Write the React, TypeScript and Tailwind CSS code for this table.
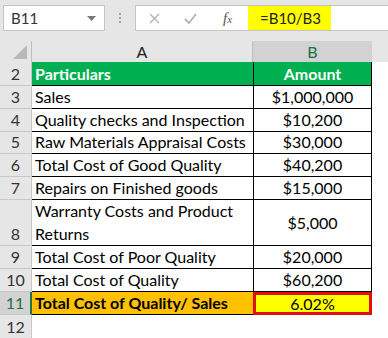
import React from "react";

const rows: { n: string; a: string; b: string; h: number }[] = [
  { n: "3", a: "Sales", b: "$1,000,000", h: 23 },
  { n: "4", a: "Quality checks and Inspection", b: "$10,200", h: 24 },
  { n: "5", a: "Raw Materials Appraisal Costs", b: "$30,000", h: 22 },
  { n: "6", a: "Total Cost of Good Quality", b: "$40,200", h: 23 },
  { n: "7", a: "Repairs on Finished goods", b: "$15,000", h: 23 },
];

const rows2: { n: string; a: string; b: string; h: number }[] = [
  { n: "9", a: "Total Cost of Poor Quality", b: "$20,000", h: 23 },
  { n: "10", a: "Total Cost of Quality", b: "$60,200", h: 23 },
];

function Row({ n, a, b, h }: { n: string; a: string; b: string; h: number }) {
  return (
    <div className="flex" style={{ height: h }}>
      <div className="w-[32px] shrink-0 bg-[#e6e6e6] border-b border-r border-[#c8c8c8] flex items-end justify-center text-[16px] text-[#333] leading-[22px]">
        {n}
      </div>
      <div className="w-[221px] shrink-0 border-b border-black flex items-end px-[3px] text-[16px] leading-[22px] text-black">
        {a}
      </div>
      <div className="w-[119px] shrink-0 border-b border-l border-r border-black flex items-end justify-center text-[16px] leading-[22px] text-black">
        {b}
      </div>
      <div className="flex-1 bg-white" />
    </div>
  );
}

export default function App() {
  return (
    <div
      className="w-[388px] h-[338px] overflow-hidden bg-white flex flex-col"
      style={{ fontFamily: "Lato, 'Open Sans', sans-serif" }}
    >
      {/* Formula bar */}
      <div className="h-[41px] shrink-0 bg-[#e6e6e6] flex pt-[5px]">
        <div className="ml-[3px] w-[102px] h-[26px] bg-white border border-[#c6c6c6] flex items-center justify-between pl-[7px] pr-[8px] text-[15px] text-[#333]">
          <span>B11</span>
          <svg width="9" height="5" viewBox="0 0 9 5">
            <path d="M0 0 L9 0 L4.5 5 Z" fill="#7a7a7a" />
          </svg>
        </div>
        <div className="w-[30px] flex flex-col items-center justify-center gap-[2px] h-[26px]">
          <div className="w-[2px] h-[2px] bg-[#a8a8a8]" />
          <div className="w-[2px] h-[2px] bg-[#a8a8a8]" />
          <div className="w-[2px] h-[2px] bg-[#a8a8a8]" />
        </div>
        <div className="flex-1 h-[26px] bg-white border border-[#c6c6c6] border-r-0 flex items-center">
          <div className="w-[112px] flex items-center h-full">
            <svg className="ml-[13px]" width="11" height="11" viewBox="0 0 11 11">
              <path d="M1 1 L10 10 M10 1 L1 10" stroke="#b4b4b4" strokeWidth="1.4" />
            </svg>
            <svg className="ml-[24px]" width="13" height="11" viewBox="0 0 13 11">
              <path d="M1 6 L5 10 L12 1" stroke="#b4b4b4" strokeWidth="1.8" fill="none" />
            </svg>
            <span
              className="ml-[26px] text-[15px] italic text-[#555]"
              style={{ fontFamily: "'Liberation Serif', serif" }}
            >
              f<span className="text-[11px]">x</span>
            </span>
          </div>
          <div className="w-[83px] h-full bg-[#ffff00] flex items-center pl-[12px] text-[15px] text-[#222]">
            =B10/B3
          </div>
        </div>
      </div>
      {/* column headers */}
      <div className="h-[21px] shrink-0 flex bg-[#e6e6e6]">
        <div className="w-[32px] shrink-0 border-r border-[#bdbdbd] relative">
          <svg className="absolute right-[4px] bottom-[3px]" width="14" height="14" viewBox="0 0 14 14">
            <path d="M14 0 L14 14 L0 14 Z" fill="#b9b9b9" />
          </svg>
        </div>
        <div className="w-[221px] shrink-0 border-r border-[#bdbdbd] flex items-center justify-center text-[16px] text-[#222]">
          A
        </div>
        <div className="w-[119px] shrink-0 bg-[#d2d2d2] flex items-center justify-center text-[16px] text-[#1e6e42]">
          B
        </div>
        <div className="flex-1" />
      </div>
      {/* row 2 header */}
      <div className="flex h-[24px]">
        <div className="w-[32px] shrink-0 bg-[#e6e6e6] border-b border-r border-[#c8c8c8] flex items-end justify-center text-[16px] text-[#333] leading-[22px]">
          2
        </div>
        <div className="w-[221px] shrink-0 bg-[#00b050] border-b border-black flex items-end px-[3px] text-[16px] leading-[22px] font-bold text-white">
          Particulars
        </div>
        <div className="w-[119px] shrink-0 bg-[#00b050] border-b border-l border-r border-black flex items-end justify-center text-[16px] leading-[22px] font-bold text-white">
          Amount
        </div>
        <div className="flex-1 bg-white" />
      </div>
      {rows.map((r) => (
        <Row key={r.n} {...r} />
      ))}
      {/* row 8 wrapped */}
      <div className="flex h-[46px]">
        <div className="w-[32px] shrink-0 bg-[#e6e6e6] border-b border-r border-[#c8c8c8] flex items-end justify-center text-[16px] text-[#333] leading-[22px]">
          8
        </div>
        <div className="w-[221px] shrink-0 border-b border-black flex items-end px-[3px] text-[16px] leading-[23px] text-black">
          <div>
            Warranty Costs and Product
            <br />
            Returns
          </div>
        </div>
        <div className="w-[119px] shrink-0 border-b border-l border-r border-black flex items-center justify-center text-[16px] leading-[22px] text-black">
          $5,000
        </div>
        <div className="flex-1 bg-white" />
      </div>
      {rows2.map((r) => (
        <Row key={r.n} {...r} />
      ))}
      {/* row 11 */}
      <div className="flex h-[23px]">
        <div className="w-[32px] shrink-0 bg-[#d2d2d2] border-b border-r-2 border-b-[#c8c8c8] border-r-[#217346] flex items-end justify-center text-[16px] text-[#1e6e42] leading-[22px]">
          11
        </div>
        <div className="w-[221px] shrink-0 bg-[#ffc000] border-b border-black flex items-end px-[3px] text-[16px] leading-[22px] font-bold text-black">
          Total Cost of Quality/ Sales
        </div>
        <div className="w-[119px] shrink-0 bg-[#ffff00] border-[3px] border-[#e01010] flex items-center justify-center text-[16px] text-black">
          6.02%
        </div>
        <div className="flex-1 bg-white" />
      </div>
      {/* row 12 */}
      <div className="flex h-[23px]">
        <div className="w-[32px] shrink-0 bg-[#e6e6e6] border-r border-[#c8c8c8] flex items-end justify-center text-[16px] text-[#333] leading-[22px]">
          12
        </div>
        <div className="flex-1 bg-white" />
      </div>
    </div>
  );
}
